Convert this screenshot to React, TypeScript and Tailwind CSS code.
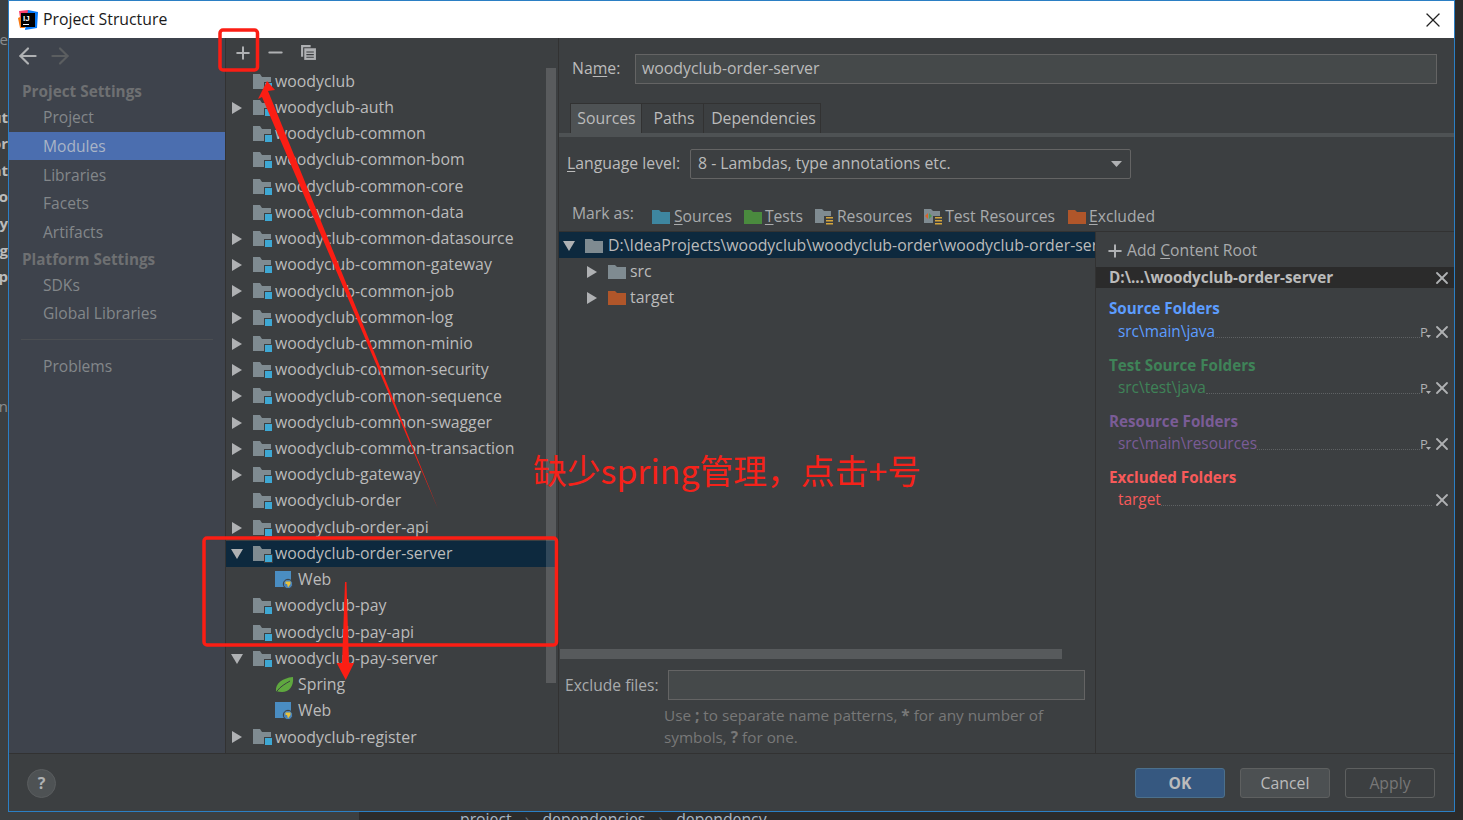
import { Plus, Minus, X, ArrowLeft, ArrowRight } from "lucide-react";

const fontStack = "font-['Segoe_UI','Open_Sans','Noto_Sans','Noto_Sans_CJK_SC',sans-serif]";

function ModuleFolder() {
  return (
    <svg width="20" height="18" viewBox="0 0 20 18" className="shrink-0">
      <path d="M0 1h7l2 3h9v12H0z" fill="#7f8b91" />
      <rect x="11.5" y="9.5" width="8" height="8" fill="#3ea8d4" stroke="#3c3f41" strokeWidth="1" />
    </svg>
  );
}

function Folder({ color }: { color: string }) {
  return (
    <svg width="18" height="14" viewBox="0 0 18 14" className="shrink-0">
      <path d="M0 0h7l2 2h9v12H0z" fill={color} />
    </svg>
  );
}

function ResourceFolder({ test }: { test?: boolean }) {
  return (
    <svg width="18" height="16" viewBox="0 0 18 16" className="shrink-0">
      <path d="M0 0h7l2 2h7v12H0z" fill="#7f8b91" />
      {test && <path d="M1 7l3-3v6z" fill="#d9622b" />}
      {test && <path d="M8 7L5 4v6z" fill="#4d9a4e" />}
      <rect x="9" y="7" width="9" height="9" fill="#3c3f41" />
      <rect x="11" y="8" width="7" height="1.5" fill="#d4a53c" />
      <rect x="11" y="11" width="7" height="1.5" fill="#d4a53c" />
      <rect x="11" y="14" width="7" height="1.5" fill="#d4a53c" />
    </svg>
  );
}

function WebIcon() {
  return (
    <svg width="18" height="18" viewBox="0 0 18 18" className="shrink-0">
      <rect x="0" y="0" width="16" height="16" fill="#4a8dc2" />
      <circle cx="13" cy="13" r="4.7" fill="#4a83b8" stroke="#3c3f41" />
      <path d="M10.5 10.5h5v2.5l-2.5 3.5-1-3.5h-1.5z" fill="#e8c23d" />
    </svg>
  );
}

function SpringLeaf() {
  return (
    <svg width="19" height="16" viewBox="0 0 19 16" className="shrink-0">
      <path d="M1 14C0 7 7 1 18 0c1 9-4 15-11 15-2 0-4-.3-6-1z" fill="#5fa83f" />
      <path d="M2 14C6 9 10 7 15 4" stroke="#3c3f41" strokeWidth="1" fill="none" />
    </svg>
  );
}

function Arrow({ open }: { open?: boolean }) {
  return (
    <svg width="12" height="12" viewBox="0 0 12 12" className="shrink-0">
      {open ? <path d="M0 1h12L6 11z" fill="#afb1b3" /> : <path d="M1 0l10 6-10 6z" fill="#afb1b3" />}
    </svg>
  );
}

function IdeaLogo() {
  return (
    <svg width="20" height="20" viewBox="0 0 20 20" className="shrink-0">
      <path d="M1 1l9-1 2 6-9 8z" fill="#fc3f6d" />
      <path d="M0 8l4-2 3 12-5 0z" fill="#f97a12" />
      <path d="M10 0l10 2-1 16-12 2z" fill="#087cfa" />
      <rect x="3" y="3" width="14" height="14" fill="#000" />
      <text x="5" y="11" fontSize="8" fontWeight="700" fill="#fff" fontFamily="Liberation Sans, sans-serif">IJ</text>
      <rect x="5" y="14" width="6" height="1" fill="#fff" />
    </svg>
  );
}

function CopyIcon() {
  return (
    <svg width="17" height="17" viewBox="0 0 16 16">
      <path d="M1 1h9v2H3v9H1z" fill="#afb1b3" />
      <path d="M4 4h11v11H4z" fill="#afb1b3" />
      <path d="M6 7h7v1H6zM6 9.5h7v1H6zM6 12h7v1H6z" fill="#3c3f41" />
    </svg>
  );
}

function CloseIcon() {
  return <X size={20} strokeWidth={2.2} color="#afb1b3" className="-m-[4px] shrink-0" />;
}

type TreeRow = { name: string; arrow?: "open" | "closed"; kind?: "web" | "spring"; selected?: boolean };

const modules: TreeRow[] = [
  { name: "woodyclub" },
  { name: "woodyclub-auth", arrow: "closed" },
  { name: "woodyclub-common" },
  { name: "woodyclub-common-bom" },
  { name: "woodyclub-common-core" },
  { name: "woodyclub-common-data" },
  { name: "woodyclub-common-datasource", arrow: "closed" },
  { name: "woodyclub-common-gateway", arrow: "closed" },
  { name: "woodyclub-common-job", arrow: "closed" },
  { name: "woodyclub-common-log", arrow: "closed" },
  { name: "woodyclub-common-minio", arrow: "closed" },
  { name: "woodyclub-common-security", arrow: "closed" },
  { name: "woodyclub-common-sequence", arrow: "closed" },
  { name: "woodyclub-common-swagger", arrow: "closed" },
  { name: "woodyclub-common-transaction", arrow: "closed" },
  { name: "woodyclub-gateway", arrow: "closed" },
  { name: "woodyclub-order" },
  { name: "woodyclub-order-api", arrow: "closed" },
  { name: "woodyclub-order-server", arrow: "open", selected: true },
  { name: "Web", kind: "web" },
  { name: "woodyclub-pay" },
  { name: "woodyclub-pay-api" },
  { name: "woodyclub-pay-server", arrow: "open" },
  { name: "Spring", kind: "spring" },
  { name: "Web", kind: "web" },
  { name: "woodyclub-register", arrow: "closed" },
];

function ModuleTree() {
  return (
    <div className="relative w-[334px] shrink-0 flex flex-col border-x border-[#323232] overflow-hidden">
      <div className="h-[30.5px] shrink-0 flex items-center pl-[7px] pb-[1px] gap-[12px]">
        <Plus size={20} strokeWidth={2.4} color="#afb1b3" />
        <Minus size={21} strokeWidth={2.4} color="#afb1b3" />
        <span className="ml-[2px] flex"><CopyIcon /></span>
      </div>
      {modules.map((row, i) => (
        <div
          key={i}
          className={`h-[26.24px] shrink-0 flex items-center ${row.selected ? "bg-[#0d293e]" : ""}`}
        >
          <div className="w-[27px] pl-[5px] shrink-0">
            {row.arrow && <Arrow open={row.arrow === "open"} />}
          </div>
          {row.kind ? (
            <div className="pl-[22px] w-[45px] shrink-0 flex">
              {row.kind === "web" ? <WebIcon /> : <SpringLeaf />}
            </div>
          ) : (
            <div className="w-[22px] shrink-0 flex">
              <ModuleFolder />
            </div>
          )}
          <span className="text-[15.85px] text-[#bbbbbb] whitespace-nowrap">{row.name}</span>
        </div>
      ))}
      {/* overlay scrollbar */}
      <div className="absolute right-[2px] top-[30px] w-[10px] h-[615px] bg-white/15" />
    </div>
  );
}

const navItems = [
  { label: "Project Settings", heading: true, h: "h-[27px] pb-[1px]" },
  { label: "Project", h: "h-[27px] pb-[2px]" },
  { label: "Modules", selected: true, h: "h-[28px] pt-[1px]" },
  { label: "Libraries", h: "h-[30px] pt-[1px]" },
  { label: "Facets", h: "h-[28px]" },
  { label: "Artifacts", h: "h-[29px]" },
  { label: "Platform Settings", heading: true, h: "h-[25px] pb-[1px]" },
  { label: "SDKs", h: "h-[28px]" },
  { label: "Global Libraries", h: "h-[28px]" },
];

function Sidebar() {
  return (
    <div className="w-[216px] shrink-0 bg-[#3e434c] flex flex-col">
      <div className="h-[40px] shrink-0 flex items-center pl-[6px] pb-[4px] gap-[6px]">
        <ArrowLeft size={26} strokeWidth={2} color="#afb1b3" />
        <ArrowRight size={26} strokeWidth={2} color="#5b5e60" />
      </div>
      <div className="flex flex-col">
        {navItems.map((item) => (
          <div
            key={item.label}
            className={`${item.h} shrink-0 flex items-center ${
              item.heading ? "pl-[13px] text-[15.3px] font-bold text-[#6e7072]" : "pl-[34px] text-[15.6px] text-[#83878a]"
            } ${item.selected ? "bg-[#4b6eaf] text-[#a9b4c6]" : ""}`}
          >
            {item.label}
          </div>
        ))}
      </div>
      <div className="h-px bg-[#4b4e52] mx-[12px] mt-[11px]" />
      <div className="h-[53px] flex items-center pl-[34px] text-[15.6px] text-[#83878a]">Problems</div>
    </div>
  );
}

const rootSections = [
  { title: "Source Folders", path: "src\\main\\java", color: "text-[#5c9dff]", top: "mt-[9px]", titleH: "h-[23px]", prefix: true },
  { title: "Test Source Folders", path: "src\\test\\java", color: "text-[#3f8358]", top: "mt-[11px]", titleH: "h-[22px]", prefix: true },
  { title: "Resource Folders", path: "src\\main\\resources", color: "text-[#7a5c96]", top: "mt-[11px]", titleH: "h-[22px]", prefix: true },
  { title: "Excluded Folders", path: "target", color: "text-[#f75a5a]", top: "mt-[11px]", titleH: "h-[22px]", prefix: false },
];

function ContentRootPanel() {
  return (
    <div className="flex-1 flex flex-col border-l border-[#323232] min-w-0">
      <div className="h-[35px] pt-[3px] shrink-0 flex items-center pl-[9px] gap-[2px] text-[15.7px] text-[#a9abad]">
        <Plus size={20} strokeWidth={2.4} color="#afb1b3" />
        <span>
          Add <u className="underline-offset-2">C</u>ontent Root
        </span>
      </div>
      <div className="h-[21px] shrink-0 bg-[#2b2b2b] flex items-center pl-[13px] pr-[6px] justify-between">
        <span className="text-[15.3px] font-bold text-[#bbbbbb]">D:\...\woodyclub-order-server</span>
        <CloseIcon />
      </div>
      {rootSections.map((s) => (
        <div key={s.title} className={`${s.top} flex flex-col`}>
          <div className={`${s.titleH} flex items-center pl-[13px] text-[15.2px] font-bold ${s.color}`}>{s.title}</div>
          <div className="h-[23px] flex items-center pl-[22px] pr-[6px]">
            <span className={`text-[15.4px] whitespace-nowrap ${s.color}`}>{s.path}</span>
            <div className="flex-1 self-end mb-[5px] border-b border-dotted border-[#5f6264]" />
            {s.prefix && (
              <span className="relative w-[12px] h-[14px] text-[13px] leading-[14px] text-[#afb1b3] shrink-0">
                P
                <svg width="5" height="3" viewBox="0 0 5 3" className="absolute right-[1px] bottom-[1px]">
                  <path d="M0 0h5L2.5 3z" fill="#afb1b3" />
                </svg>
              </span>
            )}
            <span className="ml-[4px] flex"><CloseIcon /></span>
          </div>
        </div>
      ))}
    </div>
  );
}

function TreePathRow({ color, name }: { color: string; name: string }) {
  return (
    <div className="h-[26px] shrink-0 flex items-center pl-[27px] pt-[2px] text-[15.85px] text-[#bbbbbb]">
      <Arrow />
      <span className="ml-[10px] mr-[4px] flex"><Folder color={color} /></span>
      {name}
    </div>
  );
}

function SourcesPane() {
  return (
    <div className="flex-1 min-h-0 flex flex-col">
      {/* Name */}
      <div className="h-[64px] shrink-0 flex items-center pl-[13px] pr-[17px] pb-[4px] pt-[2px]">
        <span className="w-[63px] text-[15.8px] text-[#bbbbbb] shrink-0">
          Na<u className="underline-offset-2">m</u>e:
        </span>
        <div className="flex-1 h-[30px] bg-[#45494a] border border-[#646464] flex items-center pl-[6px] text-[15.85px] text-[#bbbbbb]">
          woodyclub-order-server
        </div>
      </div>
      {/* Tabs */}
      <div className="h-[31px] shrink-0 flex pl-[11px] pt-px text-[15.8px] text-[#bbbbbb]">
        <div className="w-[71px] pl-[1px] bg-[#4e5254] flex items-center justify-center border-t border-l border-[#323232]">Sources</div>
        <div className="w-[62px] pl-[3px] flex items-center justify-center border-t border-l border-[#323232]">Paths</div>
        <div className="w-[118px] pl-[3px] flex items-center justify-center border-t border-x border-[#323232]">Dependencies</div>
      </div>
      <div className="h-[4px] shrink-0 bg-[#4e5254]" />
      {/* Language level */}
      <div className="h-[54px] shrink-0 flex items-center pl-[8px] text-[15.8px] text-[#bbbbbb]">
        <span className="w-[123px] shrink-0">
          <u className="underline-offset-2">L</u>anguage level:
        </span>
        <div className="w-[441px] h-[30px] border border-[#646464] rounded-[2px] flex items-center justify-between pl-[7px] pr-[8px]">
          <span>8 - Lambdas, type annotations etc.</span>
          <svg width="11" height="6" viewBox="0 0 11 6"><path d="M0 0h11L5.5 6z" fill="#afb1b3" /></svg>
        </div>
      </div>
      {/* Mark as */}
      <div className="h-[41px] shrink-0 flex items-center pl-[13px] text-[15.7px] text-[#a9abad] border-b border-[#323232] pt-[12px]">
        <span className="w-[80px] shrink-0 mt-[-6px]">Mark as:</span>
        <span className="flex items-center gap-[4px]"><Folder color="#3e86a0" /><span><u className="underline-offset-2">S</u>ources</span></span>
        <span className="flex items-center gap-[3px] ml-[12px]"><Folder color="#4a8a3e" /><span><u className="underline-offset-2">T</u>ests</span></span>
        <span className="flex items-center gap-[4px] ml-[12px]"><ResourceFolder /><span>Resources</span></span>
        <span className="flex items-center gap-[3px] ml-[12px]"><ResourceFolder test /><span>Test Resources</span></span>
        <span className="flex items-center gap-[3px] ml-[13px]"><Folder color="#b0562a" /><span><u className="underline-offset-2">E</u>xcluded</span></span>
      </div>
      {/* Split */}
      <div className="flex-1 min-h-0 flex">
        <div className="w-[536px] shrink-0 flex flex-col min-h-0 overflow-hidden">
          <div className="h-[26px] shrink-0 bg-[#0d293e] flex items-center pl-[4px] pt-[2px] text-[15.85px] text-[#bbbbbb] whitespace-nowrap overflow-hidden">
            <Arrow open />
            <span className="ml-[10px] mr-[5px] flex"><Folder color="#7f8b91" /></span>
            D:\IdeaProjects\woodyclub\woodyclub-order\woodyclub-order-server
          </div>
          <TreePathRow color="#7f8b91" name="src" />
          <TreePathRow color="#b0562a" name="target" />
          <div className="flex-1" />
          <div className="h-[10px] w-[502px] ml-[1px] shrink-0 bg-[#575a5c]" />
          <div className="h-[11px] shrink-0" />
          <div className="h-[30px] shrink-0 flex items-center pl-[6px] text-[15.6px] text-[#a9abad]">
            <span className="w-[103px] shrink-0 pt-px">Exclude files:</span>
            <div className="w-[417px] h-[30px] bg-[#45494a] border border-[#646464]" />
          </div>
          <div className="h-[53px] shrink-0 pl-[105px] pr-[30px] pt-[4px] text-[15.3px] leading-[22px] text-[#787878]">
            Use <b>;</b> to separate name patterns, <b>*</b> for any number of symbols, <b>?</b> for one.
          </div>
        </div>
        <ContentRootPanel />
      </div>
    </div>
  );
}

function Footer() {
  return (
    <div className="h-[58px] shrink-0 flex items-center border-t border-[#323232] pl-[18px] pr-[19px] bg-[#3c3f41]">
      <div className="w-[29px] h-[29px] rounded-full bg-[#4e5254] border border-[#5a5d5f] flex items-center justify-center text-[16px] font-bold text-[#afb1b3] mt-[1px]">
        ?
      </div>
      <div className="flex-1" />
      <div className="w-[90px] h-[30px] mt-[1px] pt-px bg-[#365880] border border-[#4c708c] rounded-[3px] flex items-center justify-center text-[15.6px] font-bold text-[#bbbbbb]">OK</div>
      <div className="w-[90px] h-[30px] mt-[1px] pt-px ml-[15px] bg-[#4c5052] border border-[#5e6060] rounded-[3px] flex items-center justify-center text-[15.8px] text-[#bbbbbb]">Cancel</div>
      <div className="w-[90px] h-[30px] mt-[1px] pt-px ml-[15px] border border-[#5e6060] rounded-[3px] flex items-center justify-center text-[15.8px] text-[#777777]">Apply</div>
    </div>
  );
}

function Annotations() {
  return (
    <>
      <svg width="1463" height="820" className="absolute left-0 top-0 pointer-events-none">
        <rect x="220" y="30" width="37.5" height="40" rx="3" fill="none" stroke="#fb1e14" strokeWidth="3.5" />
        <rect x="204" y="538" width="352.5" height="107" rx="3" fill="none" stroke="#fb1e14" strokeWidth="3.5" />
        <path d="M267 81l8 9-7 1 170 418-176-412-4 2z" fill="#fb1e14" />
        <path d="M345 582h1.5l2.5 81h5l-8.3 17-9-17h5.3z" fill="#fb1e14" />
      </svg>
      <div className="absolute left-[533px] top-[447px] text-[33.8px] leading-[46px] text-[#f5221a] whitespace-nowrap font-['Noto_Sans_CJK_SC','Liberation_Sans',sans-serif]">
        缺少spring管理，点击+号
      </div>
    </>
  );
}

const stripTexts = [
  { t: "e", h: "h-[26px]", y: "mt-[26px]" },
  { t: "ut", h: "h-[26px]", y: "mt-[52px]" },
  { t: "or", h: "h-[27px]", y: "" },
  { t: "at", h: "h-[26px]", y: "" },
  { t: "ro", h: "h-[27px]", y: "" },
  { t: "ay", h: "h-[27px]", y: "" },
  { t: "eg", h: "h-[26px]", y: "" },
  { t: "p", h: "h-[26px]", y: "" },
  { t: "n", h: "h-[26px]", y: "mt-[104px]" },
];

function LeftStrip() {
  return (
    <div className="w-[8px] shrink-0 bg-[#3c3f41] flex flex-col overflow-hidden">
      {stripTexts.map((s) => (
        <div
          key={s.t}
          className={`${s.h} ${s.y} shrink-0 flex items-center justify-end text-[15px] whitespace-nowrap ${
            s.t === "e" || s.t === "n" ? "text-[#8a8d8f]" : "font-bold text-[#bbbbbb]"
          }`}
        >
          {s.t}
        </div>
      ))}
    </div>
  );
}

export default function App() {
  return (
    <div className={`relative w-[1463px] h-[820px] overflow-hidden bg-[#2b2b2b] ${fontStack}`}>
      <div className="flex h-[812px]">
        <LeftStrip />
        <div className="w-[1447px] shrink-0 border border-[#2b7fc4] flex flex-col bg-[#3c3f41]">
          <div className="h-[37px] shrink-0 bg-white flex items-center pl-[9px] pr-[9px] text-[15.8px] text-[#1a1a1a]">
            <IdeaLogo />
            <span className="ml-[5px]">Project Structure</span>
            <div className="flex-1" />
            <X size={24} strokeWidth={1.3} color="#222222" />
          </div>
          <div className="flex-1 min-h-0 flex">
            <Sidebar />
            <ModuleTree />
            <SourcesPane />
          </div>
          <Footer />
        </div>
        <div className="flex-1 bg-[#2b2b2b]" />
      </div>
      <div className="h-[8px] flex">
        <div className="w-[359px] shrink-0 bg-[#3c3f41]" />
        <div className="ml-[101px] flex gap-[13px] text-[15.8px] leading-[14px] text-[#a9b7c6] whitespace-nowrap">
          <span>project</span>
          <span className="text-[#6e7072]">›</span>
          <span>dependencies</span>
          <span className="text-[#6e7072]">›</span>
          <span>dependency</span>
        </div>
      </div>
      <Annotations />
    </div>
  );
}
